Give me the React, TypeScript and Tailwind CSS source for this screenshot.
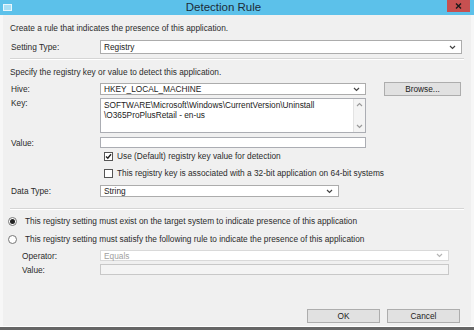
import React from "react";

const font = { fontFamily: '"Liberation Sans", Arial, sans-serif' };

const Chevron = ({ color = "#444" }: { color?: string }) => (
  <svg width="7" height="5" viewBox="0 0 7 5">
    <path d="M1 1l2.5 2.5L6 1" stroke={color} fill="none" strokeWidth="1.2" />
  </svg>
);

const Combo = ({
  text,
  w,
  h = "h-[12px]",
  disabled = false,
}: {
  text: string;
  w: string;
  h?: string;
  disabled?: boolean;
}) => (
  <div
    className={`${w} ${h} flex items-center justify-between border bg-white pl-[3px] pr-[5px] ${
      disabled ? "border-[#d9d9d9] text-[#a0a0a0]" : "border-[#acacac] text-[#222]"
    }`}
  >
    <span>{text}</span>
    <Chevron color={disabled ? "#b5b5b5" : "#444"} />
  </div>
);

const Label = ({ children, indent = false }: { children: React.ReactNode; indent?: boolean }) => (
  <div className={`${indent ? "w-[90px] pl-[12px]" : "w-[90px] pl-[1px]"} shrink-0`}>{children}</div>
);

const Button = ({ children, w }: { children: React.ReactNode; w: string }) => (
  <div
    className={`${w} h-[14px] flex items-center justify-center border border-[#adadad] bg-[#e1e1e1] text-[#222]`}
  >
    {children}
  </div>
);

const Check = ({ checked }: { checked: boolean }) => (
  <div className="w-[9px] h-[9px] border border-[#555] bg-white flex items-center justify-center">
    {checked && (
      <svg width="7" height="7" viewBox="0 0 7 7">
        <path d="M1 3.5l1.8 1.8L6 1.2" stroke="#222" fill="none" strokeWidth="1.4" />
      </svg>
    )}
  </div>
);

const Radio = ({ checked }: { checked: boolean }) => (
  <div className="w-[9px] h-[9px] rounded-full border border-[#777] bg-white flex items-center justify-center">
    {checked && <div className="w-[5px] h-[5px] rounded-full bg-[#222]" />}
  </div>
);

export default function App() {
  return (
    <div
      className="w-[474px] h-[330px] flex flex-col bg-[#f0f0f0] text-[8.3px] leading-[10px] text-[#2b2b2b] overflow-hidden"
      style={font}
    >
      {/* title bar */}
      <div className="h-[15px] shrink-0 flex items-center bg-[#5cc1ea]">
        <div className="ml-[3px] w-[9px] h-[7px] border border-[#e8f6fc] bg-[#a9dff4]" />
        <div className="flex-1 text-center text-[11.5px] leading-[15px] text-[#1d2c38] -ml-[12px]">
          Detection Rule
        </div>
        <div className="w-[23px] h-[12px] self-start mr-[4px] bg-[#c75050] flex items-center justify-center">
          <svg width="7" height="6" viewBox="0 0 7 6">
            <path d="M1 0.5l5 5M6 0.5l-5 5" stroke="#1a1a1a" strokeWidth="1.4" />
          </svg>
        </div>
      </div>

      {/* client area */}
      <div className="flex-1 flex flex-col border-x-[3px] border-[#f7f7f7] pl-[7px] pr-[7px]">
        <div className="mt-[8px]">Create a rule that indicates the presence of this application.</div>

        <div className="mt-[7px] flex items-center">
          <Label>Setting Type:</Label>
          <Combo text="Registry" w="w-[362px]" h="h-[14px]" />
        </div>

        <div className="mt-[4px] h-[1px] w-[454px] bg-[#d5d5d5]" />
        <div className="h-[1px] w-[454px] bg-white" />

        <div className="mt-[7px]">Specify the registry key or value to detect this application.</div>

        <div className="mt-[5px] flex items-center">
          <Label>Hive:</Label>
          <Combo text="HKEY_LOCAL_MACHINE" w="w-[266px]" />
          <div className="ml-[18px]">
            <Button w="w-[77px]">Browse...</Button>
          </div>
        </div>

        <div className="mt-[2px] flex items-start">
          <Label>Key:</Label>
          <div className="w-[266px] h-[35px] flex border border-[#abadb3] bg-white">
            <div className="flex-1 pl-[3px] pt-[1px] text-[#222]">
              <div>SOFTWARE\Microsoft\Windows\CurrentVersion\Uninstall</div>
              <div>\O365ProPlusRetail - en-us</div>
            </div>
            <div className="w-[12px] flex flex-col justify-between items-center bg-[#f4f4f4] border-l border-[#e3e3e3] py-[3px]">
              <svg width="7" height="5" viewBox="0 0 7 5">
                <path d="M1 4l2.5-2.5L6 4" stroke="#9a9a9a" fill="none" strokeWidth="1.1" />
              </svg>
              <Chevron color="#9a9a9a" />
            </div>
          </div>
        </div>

        <div className="mt-[4px] flex items-center">
          <Label>Value:</Label>
          <div className="w-[266px] h-[11px] border border-[#abadb3] bg-white" />
        </div>

        <div className="mt-[3px] flex items-center h-[10px] pl-[94px] gap-[4px]">
          <Check checked />
          <span>Use (Default) registry key value for detection</span>
        </div>

        <div className="mt-[7px] flex items-center h-[10px] pl-[94px] gap-[4px]">
          <Check checked={false} />
          <span>This registry key is associated with a 32-bit application on 64-bit systems</span>
        </div>

        <div className="mt-[7px] flex items-center">
          <Label>Data Type:</Label>
          <Combo text="String" w="w-[239px]" />
        </div>

        <div className="mt-[11px] h-[1px] w-[454px] bg-[#d5d5d5]" />
        <div className="h-[1px] w-[454px] bg-white" />

        <div className="mt-[6px] flex items-center h-[10px] -ml-[2px] gap-[8px]">
          <Radio checked />
          <span>
            This registry setting must exist on the target system to indicate presence of this application
          </span>
        </div>

        <div className="mt-[8px] flex items-center h-[10px] -ml-[2px] gap-[8px]">
          <Radio checked={false} />
          <span>
            This registry setting must satisfy the following rule to indicate the presence of this application
          </span>
        </div>

        <div className="mt-[6px] flex items-center">
          <Label indent>Operator:</Label>
          <Combo text="Equals" w="w-[349px]" h="h-[11px]" disabled />
        </div>

        <div className="mt-[3px] flex items-center">
          <Label indent>Value:</Label>
          <div className="w-[349px] h-[11px] border border-[#c8c8c8] bg-[#f4f4f4]" />
        </div>

        <div className="mt-auto mb-[3px] flex justify-end gap-[7px] pr-[4px]">
          <Button w="w-[73px]">OK</Button>
          <Button w="w-[73px]">Cancel</Button>
        </div>
      </div>

      <div className="h-[1px] bg-white shrink-0" />
      <div className="h-[3px] bg-[#666] shrink-0" />
    </div>
  );
}
